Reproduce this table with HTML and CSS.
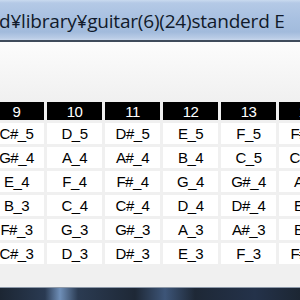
FILE: index.html
```html
<!DOCTYPE html>
<html>
<head>
<meta charset="utf-8">
<link rel="stylesheet" href="styles.css">
</head>
<body>
<div class="window">
  <div class="titlebar"><span class="title">d¥library¥guitar(6)(24)standerd E</span></div>
  <div class="content">
    <div class="grid">
      <div class="hd">9</div><div class="hd">10</div><div class="hd">11</div><div class="hd">12</div><div class="hd">13</div><div class="hd">14</div>
      <div class="c">C#_5</div><div class="c">D_5</div><div class="c">D#_5</div><div class="c">E_5</div><div class="c">F_5</div><div class="c">F#_5</div>
      <div class="c">G#_4</div><div class="c">A_4</div><div class="c">A#_4</div><div class="c">B_4</div><div class="c">C_5</div><div class="c">C#_5</div>
      <div class="c">E_4</div><div class="c">F_4</div><div class="c">F#_4</div><div class="c">G_4</div><div class="c">G#_4</div><div class="c">A_4</div>
      <div class="c">B_3</div><div class="c">C_4</div><div class="c">C#_4</div><div class="c">D_4</div><div class="c">D#_4</div><div class="c">E_4</div>
      <div class="c">F#_3</div><div class="c">G_3</div><div class="c">G#_3</div><div class="c">A_3</div><div class="c">A#_3</div><div class="c">B_3</div>
      <div class="c">C#_3</div><div class="c">D_3</div><div class="c">D#_3</div><div class="c">E_3</div><div class="c">F_3</div><div class="c">F#_3</div>
    </div>
  </div>
  <div class="taskbar"></div>
</div>
</body>
</html>
```
FILE: styles.css
```css
html, body {
  margin: 0;
  padding: 0;
}
body {
  width: 300px;
  height: 300px;
  overflow: hidden;
  background: #f0f0f0;
}
.window {
  display: flex;
  flex-direction: column;
  width: 300px;
  height: 300px;
  overflow: hidden;
}
.titlebar {
  height: 40px;
  flex: none;
  display: flex;
  align-items: center;
  background: linear-gradient(to bottom, #c9daef 0px, #b4c9e6 3px, #a9c1e1 18px, #a2bbdc 32px, #b9cce6 38px, #c8d7ec 40px);
  border-bottom: 2px solid #3f4b5b;
  white-space: nowrap;
  overflow: hidden;
}
.title {
  font-family: "Open Sans", "Noto Sans", sans-serif;
  font-size: 19px;
  color: #111a2a;
  margin-left: -1px;
  letter-spacing: -0.2px;
  padding-top: 2px;
}
.content {
  flex: 1;
  background: linear-gradient(to bottom, #fcfcfc 0px, #f0f0f0 60px, #f0f0f0 100%);
  padding-top: 60px;
  overflow: hidden;
}
.grid {
  display: grid;
  grid-template-columns: repeat(6, 55px);
  grid-template-rows: 18px repeat(6, 21px);
  column-gap: 3px;
  row-gap: 3px;
  margin-left: -11px;
  width: 400px;
}
.hd, .c {
  display: flex;
  align-items: center;
  justify-content: center;
  font-family: "Liberation Sans", Arial, sans-serif;
  font-size: 15px;
  letter-spacing: -0.5px;
}
.hd {
  background: #000;
  color: #fff;
}
.c {
  background: #fff;
  color: #000;
}
.taskbar {
  height: 12px;
  flex: none;
  border-top: 1px solid #8c98a8;
  background: linear-gradient(to right, #1c2633 0%, #2a3a52 15%, #6f8fb8 20%, #2b3b52 26%, #1e2836 45%, #3d5578 55%, #1e2836 65%, #24324a 85%, #1c2633 100%);
}
```
